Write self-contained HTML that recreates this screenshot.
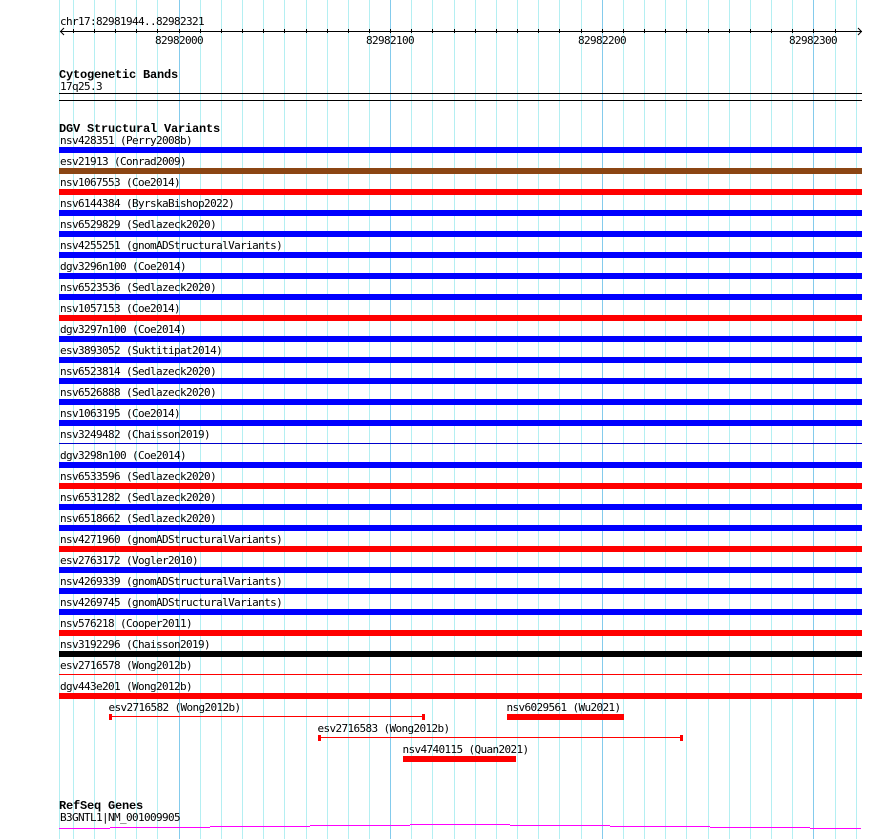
<!DOCTYPE html>
<html><head><meta charset="utf-8"><style>
html,body{margin:0;padding:0;background:#fff;width:890px;height:839px;overflow:hidden}
svg{display:block;shape-rendering:crispEdges}
text{font-family:"DejaVu Sans Mono","Liberation Mono",monospace;font-size:11px;letter-spacing:-0.62px;fill:#000}
text.b{font-family:"Liberation Mono",monospace;font-size:12px;font-weight:bold;letter-spacing:-0.2px}
.g path{fill:none;stroke:#b4eff2;stroke-width:1}
</style></head><body>
<svg width="890" height="839" viewBox="0 0 890 839" xmlns="http://www.w3.org/2000/svg">
<rect width="890" height="839" fill="#fff"/>
<g class="g"><path d="M59.5 0V839M73.5 0V839M94.5 0V839M115.5 0V839M136.5 0V839M157.5 0V839M200.5 0V839M221.5 0V839M242.5 0V839M263.5 0V839M284.5 0V839M306.5 0V839M327.5 0V839M348.5 0V839M369.5 0V839M411.5 0V839M432.5 0V839M454.5 0V839M475.5 0V839M496.5 0V839M517.5 0V839M538.5 0V839M559.5 0V839M581.5 0V839M623.5 0V839M644.5 0V839M665.5 0V839M686.5 0V839M708.5 0V839M729.5 0V839M750.5 0V839M771.5 0V839M792.5 0V839M835.5 0V839M856.5 0V839"/>
<path style="stroke:#84cbec" d="M179.5 0V839M390.5 0V839M602.5 0V839M813.5 0V839"/></g>

<text x="60" y="25">chr17:82981944..82982321</text>
<path d="M60 31H862" stroke="#000" fill="none" transform="translate(0 .5)"/>
<path d="M73.5 29V33M94.5 29V33M115.5 29V33M136.5 29V33M157.5 29V33M179.5 29V33M200.5 29V33M221.5 29V33M242.5 29V33M263.5 29V33M284.5 29V33M306.5 29V33M327.5 29V33M348.5 29V33M369.5 29V33M390.5 29V33M411.5 29V33M432.5 29V33M454.5 29V33M475.5 29V33M496.5 29V33M517.5 29V33M538.5 29V33M559.5 29V33M581.5 29V33M602.5 29V33M623.5 29V33M644.5 29V33M665.5 29V33M686.5 29V33M708.5 29V33M729.5 29V33M750.5 29V33M771.5 29V33M792.5 29V33M813.5 29V33M835.5 29V33" stroke="#000" fill="none"/>
<path d="M64 28L60.5 31.5L64 35M858 28L861.5 31.5L858 35" stroke="#000" fill="none" style="shape-rendering:auto"/>
<text x="155" y="44">82982000</text>
<text x="366" y="44">82982100</text>
<text x="578" y="44">82982200</text>
<text x="789" y="44">82982300</text>

<text class="b" x="59" y="78">Cytogenetic Bands</text>
<text x="60" y="90">17q25.3</text>
<rect x="59" y="93" width="803" height="1" fill="#000"/>
<rect x="59" y="100" width="803" height="1" fill="#000"/>

<text class="b" x="59" y="132">DGV Structural Variants</text>

<text x="60" y="144">nsv428351 (Perry2008b)</text><rect x="59" y="147" width="803" height="6" fill="#00f"/>
<text x="60" y="165">esv21913 (Conrad2009)</text><rect x="59" y="168" width="803" height="6" fill="#8b4513"/>
<text x="60" y="186">nsv1067553 (Coe2014)</text><rect x="59" y="189" width="803" height="6" fill="#f00"/>
<text x="60" y="207">nsv6144384 (ByrskaBishop2022)</text><rect x="59" y="210" width="803" height="6" fill="#00f"/>
<text x="60" y="228">nsv6529829 (Sedlazeck2020)</text><rect x="59" y="231" width="803" height="6" fill="#00f"/>
<text x="60" y="249">nsv4255251 (gnomADStructuralVariants)</text><rect x="59" y="252" width="803" height="6" fill="#00f"/>
<text x="60" y="270">dgv3296n100 (Coe2014)</text><rect x="59" y="273" width="803" height="6" fill="#00f"/>
<text x="60" y="291">nsv6523536 (Sedlazeck2020)</text><rect x="59" y="294" width="803" height="6" fill="#00f"/>
<text x="60" y="312">nsv1057153 (Coe2014)</text><rect x="59" y="315" width="803" height="6" fill="#f00"/>
<text x="60" y="333">dgv3297n100 (Coe2014)</text><rect x="59" y="336" width="803" height="6" fill="#00f"/>
<text x="60" y="354">esv3893052 (Suktitipat2014)</text><rect x="59" y="357" width="803" height="6" fill="#00f"/>
<text x="60" y="375">nsv6523814 (Sedlazeck2020)</text><rect x="59" y="378" width="803" height="6" fill="#00f"/>
<text x="60" y="396">nsv6526888 (Sedlazeck2020)</text><rect x="59" y="399" width="803" height="6" fill="#00f"/>
<text x="60" y="417">nsv1063195 (Coe2014)</text><rect x="59" y="420" width="803" height="6" fill="#00f"/>
<text x="60" y="438">nsv3249482 (Chaisson2019)</text><rect x="59" y="443" width="803" height="1" fill="#00c"/>
<text x="60" y="459">dgv3298n100 (Coe2014)</text><rect x="59" y="462" width="803" height="6" fill="#00f"/>
<text x="60" y="480">nsv6533596 (Sedlazeck2020)</text><rect x="59" y="483" width="803" height="6" fill="#f00"/>
<text x="60" y="501">nsv6531282 (Sedlazeck2020)</text><rect x="59" y="504" width="803" height="6" fill="#00f"/>
<text x="60" y="522">nsv6518662 (Sedlazeck2020)</text><rect x="59" y="525" width="803" height="6" fill="#00f"/>
<text x="60" y="543">nsv4271960 (gnomADStructuralVariants)</text><rect x="59" y="546" width="803" height="6" fill="#f00"/>
<text x="60" y="564">esv2763172 (Vogler2010)</text><rect x="59" y="567" width="803" height="6" fill="#00f"/>
<text x="60" y="585">nsv4269339 (gnomADStructuralVariants)</text><rect x="59" y="588" width="803" height="6" fill="#00f"/>
<text x="60" y="606">nsv4269745 (gnomADStructuralVariants)</text><rect x="59" y="609" width="803" height="6" fill="#00f"/>
<text x="60" y="627">nsv576218 (Cooper2011)</text><rect x="59" y="630" width="803" height="6" fill="#f00"/>
<text x="60" y="648">nsv3192296 (Chaisson2019)</text><rect x="59" y="651" width="803" height="6" fill="#000"/>
<text x="60" y="669">esv2716578 (Wong2012b)</text><rect x="59" y="674" width="803" height="1" fill="#f00"/>
<text x="60" y="690">dgv443e201 (Wong2012b)</text><rect x="59" y="693" width="803" height="6" fill="#f00"/>

<text x="108.5" y="711">esv2716582 (Wong2012b)</text>
<rect x="109" y="714" width="3" height="6" fill="#f00"/><rect x="112" y="716" width="310" height="1" fill="#f00"/><rect x="422" y="714" width="3" height="6" fill="#f00"/>
<text x="506.5" y="711">nsv6029561 (Wu2021)</text>
<rect x="507" y="714" width="117" height="6" fill="#f00"/>
<text x="317.5" y="732">esv2716583 (Wong2012b)</text>
<rect x="318" y="735" width="3" height="6" fill="#f00"/><rect x="321" y="737" width="359" height="1" fill="#f00"/><rect x="680" y="735" width="3" height="6" fill="#f00"/>
<text x="402.5" y="753">nsv4740115 (Quan2021)</text>
<rect x="403" y="756" width="113" height="6" fill="#f00"/>

<text class="b" x="59" y="809">RefSeq Genes</text>
<text x="60" y="821">B3GNTL1|NM_001009905</text>
<g fill="#f0f">
<rect x="59" y="828" width="51" height="1"/>
<rect x="110" y="827" width="100" height="1"/>
<rect x="210" y="826" width="100" height="1"/>
<rect x="310" y="825" width="100" height="1"/>
<rect x="410" y="824" width="100" height="1"/>
<rect x="510" y="825" width="100" height="1"/>
<rect x="610" y="826" width="100" height="1"/>
<rect x="710" y="827" width="100" height="1"/>
<rect x="810" y="828" width="51" height="1"/>
</g>
</svg>
</body></html>
